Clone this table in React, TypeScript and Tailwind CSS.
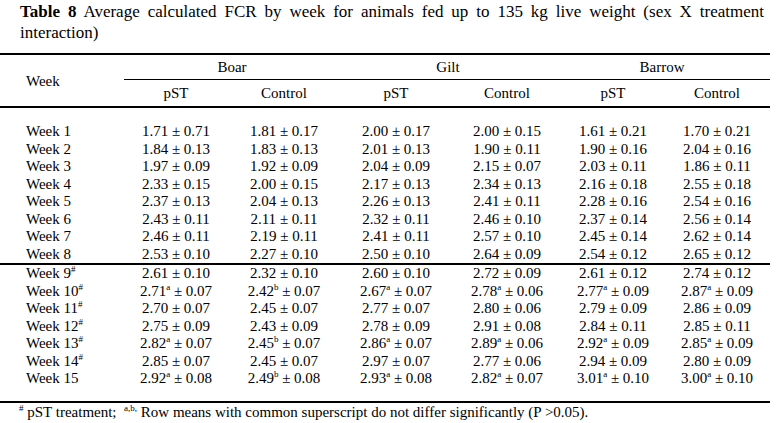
type Cell = [string, string, string?]; // mean, sd, superscript

const rows: { week: string; mark?: boolean; cells: Cell[] }[] = [
  { week: "Week 1", cells: [["1.71", "0.71"], ["1.81", "0.17"], ["2.00", "0.17"], ["2.00", "0.15"], ["1.61", "0.21"], ["1.70", "0.21"]] },
  { week: "Week 2", cells: [["1.84", "0.13"], ["1.83", "0.13"], ["2.01", "0.13"], ["1.90", "0.11"], ["1.90", "0.16"], ["2.04", "0.16"]] },
  { week: "Week 3", cells: [["1.97", "0.09"], ["1.92", "0.09"], ["2.04", "0.09"], ["2.15", "0.07"], ["2.03", "0.11"], ["1.86", "0.11"]] },
  { week: "Week 4", cells: [["2.33", "0.15"], ["2.00", "0.15"], ["2.17", "0.13"], ["2.34", "0.13"], ["2.16", "0.18"], ["2.55", "0.18"]] },
  { week: "Week 5", cells: [["2.37", "0.13"], ["2.04", "0.13"], ["2.26", "0.13"], ["2.41", "0.11"], ["2.28", "0.16"], ["2.54", "0.16"]] },
  { week: "Week 6", cells: [["2.43", "0.11"], ["2.11", "0.11"], ["2.32", "0.11"], ["2.46", "0.10"], ["2.37", "0.14"], ["2.56", "0.14"]] },
  { week: "Week 7", cells: [["2.46", "0.11"], ["2.19", "0.11"], ["2.41", "0.11"], ["2.57", "0.10"], ["2.45", "0.14"], ["2.62", "0.14"]] },
  { week: "Week 8", cells: [["2.53", "0.10"], ["2.27", "0.10"], ["2.50", "0.10"], ["2.64", "0.09"], ["2.54", "0.12"], ["2.65", "0.12"]] },
];

const rows2: { week: string; mark?: boolean; cells: Cell[] }[] = [
  { week: "Week 9", mark: true, cells: [["2.61", "0.10"], ["2.32", "0.10"], ["2.60", "0.10"], ["2.72", "0.09"], ["2.61", "0.12"], ["2.74", "0.12"]] },
  { week: "Week 10", mark: true, cells: [["2.71", "0.07", "a"], ["2.42", "0.07", "b"], ["2.67", "0.07", "a"], ["2.78", "0.06", "a"], ["2.77", "0.09", "a"], ["2.87", "0.09", "a"]] },
  { week: "Week 11", mark: true, cells: [["2.70", "0.07"], ["2.45", "0.07"], ["2.77", "0.07"], ["2.80", "0.06"], ["2.79", "0.09"], ["2.86", "0.09"]] },
  { week: "Week 12", mark: true, cells: [["2.75", "0.09"], ["2.43", "0.09"], ["2.78", "0.09"], ["2.91", "0.08"], ["2.84", "0.11"], ["2.85", "0.11"]] },
  { week: "Week 13", mark: true, cells: [["2.82", "0.07", "a"], ["2.45", "0.07", "b"], ["2.86", "0.07", "a"], ["2.89", "0.06", "a"], ["2.92", "0.09", "a"], ["2.85", "0.09", "a"]] },
  { week: "Week 14", mark: true, cells: [["2.85", "0.07"], ["2.45", "0.07"], ["2.97", "0.07"], ["2.77", "0.06"], ["2.94", "0.09"], ["2.80", "0.09"]] },
  { week: "Week 15", cells: [["2.92", "0.08", "a"], ["2.49", "0.08", "b"], ["2.93", "0.08", "a"], ["2.82", "0.07", "a"], ["3.01", "0.10", "a"], ["3.00", "0.10", "a"]] },
];

const grid = "grid grid-cols-[124px_104px_112px_112px_110px_102px_106px]";

function Sup({ children }: { children: string }) {
  return <span className="relative -top-[6px] text-[9px] leading-none">{children}</span>;
}

function Row({ week, mark, cells }: { week: string; mark?: boolean; cells: Cell[] }) {
  return (
    <div className={`${grid} h-[17.5px] items-center`}>
      <div className="pl-[26px]">
        {week}
        {mark && <Sup>#</Sup>}
      </div>
      {cells.map(([m, sd, s], i) => (
        <div key={i} className="text-center whitespace-nowrap">
          {m}
          {s && <Sup>{s}</Sup>} ± {sd}
        </div>
      ))}
    </div>
  );
}

export default function App() {
  return (
    <div className="w-[778px] h-[423px] bg-white text-black font-['Liberation_Serif','Times_New_Roman',serif] overflow-hidden">
      {/* Caption */}
      <p className="pl-[20px] w-[764px] pt-[1px] text-[17px] leading-[21px] text-justify">
        <b>Table 8</b> Average calculated FCR by week for animals fed up to 135 kg live weight (sex X treatment
        interaction)
      </p>

      <div className="mt-[10px] w-[770px] text-[15px] leading-[17px]">
        {/* Header */}
        <div className={`${grid} border-t-2 border-b-2 border-black`}>
          <div className="row-span-2 flex items-center pl-[26px] pt-[1px]">Week</div>
          <div className="col-span-2 h-[25px] flex items-center justify-center border-b border-black">Boar</div>
          <div className="col-span-2 h-[25px] flex items-center justify-center border-b border-black pr-[6px]">Gilt</div>
          <div className="col-span-2 h-[25px] flex items-center justify-center border-b border-black pr-[8px]">Barrow</div>
          {["pST", "Control", "pST", "Control", "pST", "Control"].map((h, i) => (
            <div key={i} className="h-[26px] flex items-center justify-center">
              {h}
            </div>
          ))}
        </div>

        {/* Weeks 1-8 */}
        <div className="pt-[15px] border-b-2 border-black">
          {rows.map((r) => (
            <Row key={r.week} {...r} />
          ))}
        </div>

        {/* Weeks 9-15, pST treatment period */}
        <div className="pb-[13px] border-b-2 border-black">
          {rows2.map((r) => (
            <Row key={r.week} {...r} />
          ))}
        </div>

        <p className="pl-[19px] pt-[1px] whitespace-nowrap">
          <Sup>#</Sup> pST treatment;&nbsp; <Sup>a,b,</Sup> Row means with common superscript do not differ significantly (P &gt;0.05).
        </p>
      </div>
    </div>
  );
}
